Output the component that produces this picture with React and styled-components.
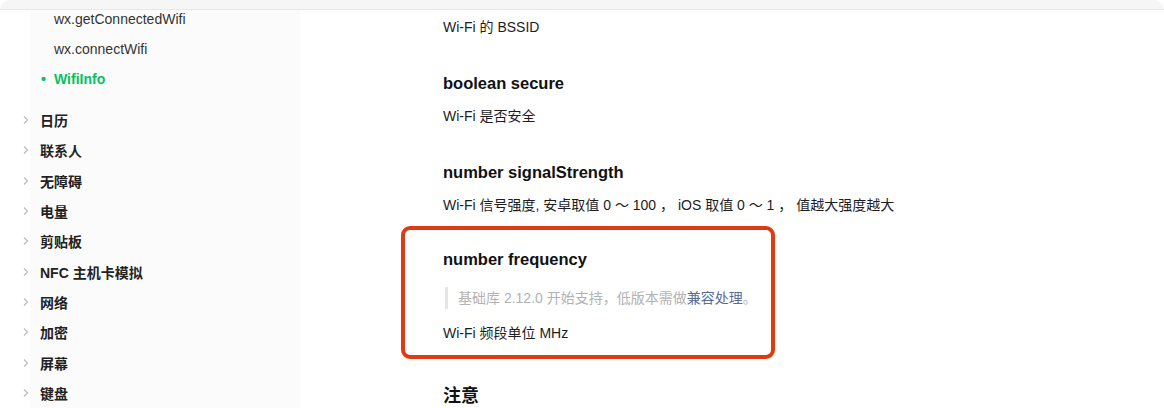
import React from "react";
import styled, { createGlobalStyle } from "styled-components";

const GlobalStyle = createGlobalStyle`
  html, body {
    margin: 0;
    padding: 0;
    background: #fff;
  }
  body {
    font-family: "Liberation Sans", "Noto Sans CJK SC", sans-serif;
    -webkit-font-smoothing: antialiased;
  }
`;

const Window = styled.div`
  width: 1164px;
  height: 408px;
  overflow: hidden;
  display: flex;
  flex-direction: column;
  background: #fff;
`;

const TopBar = styled.div`
  flex: 0 0 9px;
  background: #f6f6f6;
  border-bottom: 1px solid #e8e8e8;
  border-radius: 10px 10px 0 0;
`;

const Body = styled.div`
  flex: 1;
  display: flex;
  min-height: 0;
`;

const Sidebar = styled.nav`
  width: 300px;
  flex: 0 0 300px;
  background: linear-gradient(to right, #fff 30px, #fbfbfb 30px);
  overflow: hidden;
`;

const SubList = styled.ul`
  list-style: none;
  margin: -6px 0 0;
  padding: 0 0 11px;
`;

const SubItem = styled.li`
  position: relative;
  height: 30px;
  line-height: 30px;
  padding-left: 54px;
  font-size: 14px;
  color: ${(p) => (p.$active ? "#07c160" : "#333")};
  font-weight: ${(p) => (p.$active ? 700 : 400)};

  &::before {
    content: ${(p) => (p.$active ? '"•"' : "none")};
    position: absolute;
    left: 41px;
    top: 0;
  }
`;

const CatList = styled.ul`
  list-style: none;
  margin: 0;
  padding: 0;
`;

const CatItem = styled.li`
  display: flex;
  align-items: center;
  height: 30.33px;
  padding-left: 21px;
  font-size: 14px;
  font-weight: 700;
  color: #222;
`;

const Chevron = styled.svg`
  width: 10px;
  height: 10px;
  margin-right: 9px;
  flex: none;
`;

const Main = styled.main`
  flex: 1;
  padding: 6px 0 0 143px;
  color: #1d1d1d;
`;

const Para = styled.p`
  margin: 0;
  font-size: 14px;
  line-height: 22px;
`;

const Section = styled.section`
  margin-top: 33px;
`;

const FieldTitle = styled.h3`
  margin: 0 0 10px;
  font-size: 16.5px;
  line-height: 24px;
  font-weight: 700;
  color: #111;
`;

const Highlight = styled.section`
  box-sizing: border-box;
  width: 374px;
  margin: 10px 0 0 -42px;
  padding: 17px 0 11px 38px;
  border: 4px solid #dc3b16;
  border-radius: 9px;
`;

const Quote = styled.blockquote`
  margin: 16px 0 13px 2px;
  padding-left: 10px;
  border-left: 3px solid #e6e6e6;
  font-size: 14px;
  line-height: 22px;
  color: #b2b2b2;

  a {
    color: #576b95;
    text-decoration: none;
  }
`;

const Notice = styled.h2`
  margin: 24px 0 0;
  font-size: 18px;
  line-height: 26px;
  font-weight: 700;
  color: #111;
`;

const ChevronIcon = () => (
  <Chevron viewBox="0 0 10 10">
    <path d="M3 1.5 L6.5 5 L3 8.5" fill="none" stroke="#bdbdbd" strokeWidth="1.3" />
  </Chevron>
);

const categories = [
  "日历",
  "联系人",
  "无障碍",
  "电量",
  "剪贴板",
  "NFC 主机卡模拟",
  "网络",
  "加密",
  "屏幕",
  "键盘",
];

export default function App() {
  return (
    <>
      <GlobalStyle />
      <Window>
        <TopBar />
        <Body>
          <Sidebar>
            <SubList>
              <SubItem>wx.getConnectedWifi</SubItem>
              <SubItem>wx.connectWifi</SubItem>
              <SubItem $active>WifiInfo</SubItem>
            </SubList>
            <CatList>
              {categories.map((c) => (
                <CatItem key={c}>
                  <ChevronIcon />
                  {c}
                </CatItem>
              ))}
            </CatList>
          </Sidebar>
          <Main>
            <Para>Wi-Fi 的 BSSID</Para>
            <Section>
              <FieldTitle>boolean secure</FieldTitle>
              <Para>Wi-Fi 是否安全</Para>
            </Section>
            <Section>
              <FieldTitle>number signalStrength</FieldTitle>
              <Para>
                Wi-Fi 信号强度, 安卓取值 0 ～ 100 ， iOS 取值 0 ～ 1 ， 值越大强度越大
              </Para>
            </Section>
            <Highlight>
              <FieldTitle>number frequency</FieldTitle>
              <Quote>
                基础库 2.12.0 开始支持，低版本需做<a href="#compat">兼容处理</a>。
              </Quote>
              <Para>Wi-Fi 频段单位 MHz</Para>
            </Highlight>
            <Notice>注意</Notice>
          </Main>
        </Body>
      </Window>
    </>
  );
}
